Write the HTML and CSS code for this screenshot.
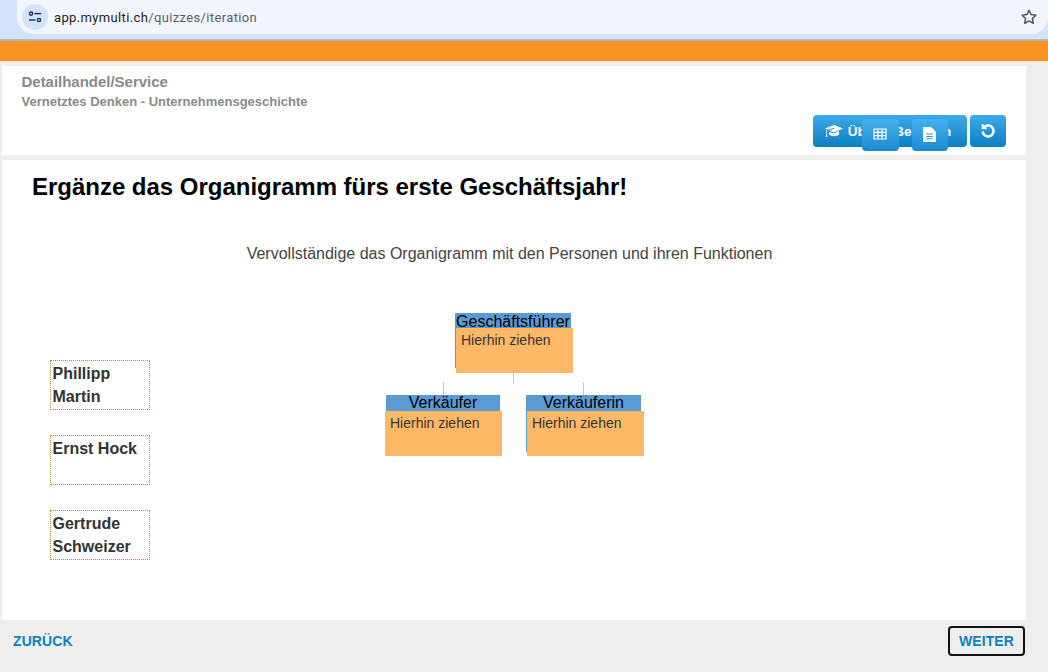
FILE: index.html
```html
<!DOCTYPE html>
<html lang="de">
<head>
<meta charset="utf-8">
<title>Organigramm</title>
<link rel="stylesheet" href="styles.css">
</head>
<body>
<header class="browser">
  <div class="address">
    <span class="site-icon">
      <svg width="14" height="12" viewBox="0 0 14 12" fill="none" stroke="#1f2a44" stroke-width="1.4">
        <circle cx="3" cy="2.6" r="1.6"/><path d="M6.5 2.6H13"/>
        <circle cx="11" cy="9" r="1.6"/><path d="M1 9H7.5"/>
      </svg>
    </span>
    <span class="url"><span class="host">app.mymulti.ch</span>/quizzes/iteration</span>
    <svg class="star" width="18" height="18" viewBox="0 0 18 18" fill="none" stroke="#50545a" stroke-width="1.5" stroke-linejoin="round">
      <path d="M9 2.2l2.1 4.4 4.8.6-3.500 3.300.9 4.800L9 12.900l-4.300 2.400.9-4.800L2.100 7.200l4.800-.6z"/>
    </svg>
  </div>
</header>
<div class="orange"></div>
<main class="page">
  <section class="card head-card">
    <h2 class="course">Detailhandel/Service</h2>
    <h3 class="lesson">Vernetztes Denken - Unternehmensgeschichte</h3>
    <div class="toolbar">
      <button class="btn btn-main">
        <svg width="18" height="14" viewBox="0 0 18 14" fill="#fff"><path d="M9 1L0 4.500l3 1.200L9 3.700l.4.8-5 2.200L9 8.500l9-4z"/><path d="M1.300 5.500v5L.6 13h2l-.6-2.500V6z"/><path d="M4 8v2.800c2.500 1.800 7.500 1.800 10 0V6.800L9 9.400z"/></svg>
        <span>Übung Beenden</span>
      </button>
      <button class="btn btn-reset">
        <svg width="16" height="16" viewBox="0 0 16 16" fill="none" stroke="#fff" stroke-width="2.400"><path d="M4 4.200A5.500 5.500 0 1 1 2.600 8.500"/><path d="M2.700 1.200v4h4" stroke-width="2"/></svg>
      </button>
      <button class="btn btn-float btn-table">
        <svg width="14" height="12" viewBox="0 0 14 12" fill="none" stroke="#fff" stroke-width="1.200"><path d="M1 1h12v10H1zM1 4.300h12M1 7.700h12M5 1v10M9 1v10"/></svg>
      </button>
      <button class="btn btn-float btn-doc">
        <svg width="13" height="15" viewBox="0 0 12 14"><path fill="#fff" d="M0 0h7.500L12 4.500V14H0z"/><path stroke="#2a8fd4" stroke-width="1" d="M3 6.500h6M3 8.800h6M3 11h6"/></svg>
      </button>
    </div>
  </section>
  <section class="card task-card">
    <h1 class="title">Ergänze das Organigramm fürs erste Geschäftsjahr!</h1>
    <p class="intro">Vervollständige das Organigramm mit den Personen und ihren Funktionen</p>
    <div class="work">
      <div class="names">
        <div class="name">Phillipp Martin</div>
        <div class="name">Ernst Hock</div>
        <div class="name">Gertrude Schweizer</div>
      </div>
      <div class="chart">
        <div class="node n-top"><div class="role">Geschäftsführer</div></div>
        <div class="drop d-top">Hierhin ziehen</div>
        <i class="line l-a"></i><i class="line l-b"></i><i class="line l-c"></i>
        <div class="node n-left"><div class="role">Verkäufer</div></div>
        <div class="drop d-left">Hierhin ziehen</div>
        <div class="node n-right"><div class="role">Verkäuferin</div></div>
        <div class="drop d-right">Hierhin ziehen</div>
      </div>
    </div>
  </section>
  <nav class="foot">
    <a class="nav-link">ZURÜCK</a>
    <a class="nav-link nav-next">WEITER</a>
  </nav>
</main>
</body>
</html>
```
FILE: styles.css
```css
* { box-sizing: border-box; }
html, body { margin: 0; height: 100%; }
body { width: 1048px; height: 672px; overflow: hidden; background: #eeeeee; font-family: "Liberation Sans", Arial, sans-serif; }

.browser { height: 41px; background: #d3e3fd; border-bottom: 2px solid #b4b8bf; padding-left: 17px; }
.address { height: 34px; background: #f1f5fc; border-radius: 0 0 17px 17px; display: flex; align-items: center; padding: 0 10px 0 5px; }
.site-icon { width: 26px; height: 26px; border-radius: 50%; background: #d3e3fd; display: flex; align-items: center; justify-content: center; }
.url { margin-left: 6px; font: 13px "Roboto", "Noto Sans", sans-serif; letter-spacing: .36px; color: #5a5f66; flex: 1; }
.host { color: #1f2124; }
.star { flex: none; }

.orange { height: 20px; background: #f89522; }

.page { padding: 5px 22px 0 2px; background: linear-gradient(#f6ecdf 0, #f0eeeb 5px, #eeeeee 6px); }
.card { background: #fff; }

.head-card { height: 89px; padding: 7px 19.500px 0; position: relative; }
.course { margin: 0; font-size: 15px; line-height: 18px; font-weight: 700; color: #8a8a8a; letter-spacing: -.02px; }
.lesson { margin: 3px 0 0; font-size: 13px; line-height: 15px; font-weight: 700; color: #8a8a8a; }
.toolbar { position: absolute; right: 20px; top: 49px; display: flex; gap: 3px; }
.btn { border: 0; border-radius: 4px; height: 32px; padding: 0; color: #fff; background: linear-gradient(#3fa9e8, #0b7fc4); display: flex; align-items: center; justify-content: center; font: 700 13.500px "Liberation Sans", Arial, sans-serif; }
.btn-main { width: 154px; gap: 5px; white-space: nowrap; padding-right: 4px; }
.btn-reset { width: 36px; }
.btn-float { position: absolute; top: 4px; height: 32px; background: linear-gradient(#45b0ee, #1a8bd0); padding: 0 2px 2px 0; }
.btn-table { left: 49px; width: 37px; }
.btn-doc { left: 99px; width: 36px; }

.task-card { height: 460px; margin-top: 5px; padding-top: 13px; }
.title { margin: 0 0 0 30px; font-size: 24px; line-height: 27px; font-weight: 700; color: #000; letter-spacing: -.02px; }
.intro { margin: 45px 0 0; padding-right: 9px; text-align: center; font-size: 16px; line-height: 18px; color: #444; }
.work { display: flex; margin-top: 49px; position: relative; }
.names { margin: 48px 0 0 48px; width: 100px; display: flex; flex-direction: column; gap: 25px; }
.name { width: 100px; height: 50px; border: 1px dotted #bd8f30; padding: 1px 1px 0 1.500px; font-size: 16px; line-height: 23px; font-weight: 700; color: #333; }

.chart { position: relative; flex: 1; }
.node { position: absolute; background: #5b9bd5; }
.role { text-align: center; font-size: 16px; line-height: 17px; color: #000; }
.n-top { left: 305px; top: 1px; width: 116px; height: 55px; }
.n-left { left: 236px; top: 83px; width: 114px; height: 57px; }
.n-right { left: 376px; top: 83px; width: 115px; height: 57px; }
.n-left .role, .n-right .role { line-height: 15px; }
.drop { position: absolute; background: #ffb966; font-size: 14px; line-height: 16px; color: #333; padding: 4px 0 0 5px; width: 117px; height: 45px; }
.d-top { left: 306px; top: 16px; }
.d-left { left: 235px; top: 99px; }
.d-right { left: 377px; top: 99px; }
.line { position: absolute; width: 1px; background: #bccadb; }
.l-a { left: 363px; top: 61px; height: 10px; }
.l-b { left: 293px; top: 70px; height: 13px; }
.l-c { left: 433px; top: 70px; height: 13px; }

.foot { display: flex; justify-content: space-between; align-items: center; padding: 6px 0 0 11px; }
.nav-link { font-size: 14px; font-weight: 700; color: #0f7fc1; letter-spacing: .1px; }
.nav-next { width: 77px; height: 30px; border: 2px solid #111; border-radius: 4px; display: flex; align-items: center; justify-content: center; margin-right: 1px; }
```
